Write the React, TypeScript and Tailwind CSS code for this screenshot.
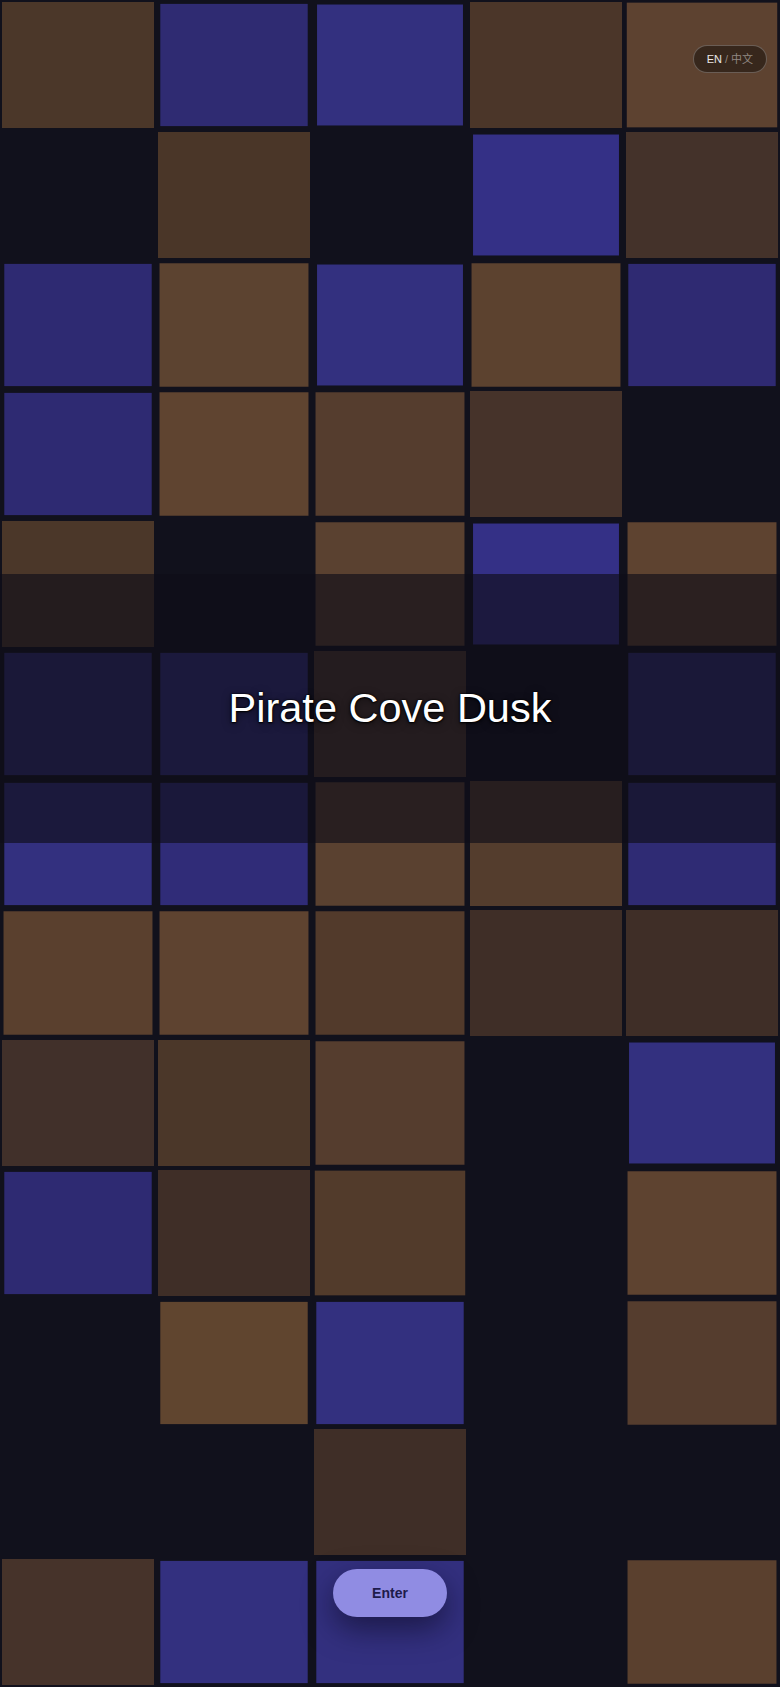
type Tile = [string, string] | null;

// each row: five cells, [bg, scale] or null for an empty slot
const ROWS: Tile[][] = [
  [['bg-[#4b3729]', 'scale-100'], ['bg-[#2f2b72]', 'scale-[0.97]'], ['bg-[#33307f]', 'scale-[0.96]'], ['bg-[#4b3629]', 'scale-100'], ['bg-[#5d4230]', 'scale-[0.99]']],
  [null, ['bg-[#4a3628]', 'scale-100'], null, ['bg-[#343086]', 'scale-[0.96]'], ['bg-[#44322a]', 'scale-100']],
  [['bg-[#2e2a72]', 'scale-[0.97]'], ['bg-[#5c4330]', 'scale-[0.98]'], ['bg-[#33307f]', 'scale-[0.96]'], ['bg-[#5c422f]', 'scale-[0.98]'], ['bg-[#2f2a72]', 'scale-[0.97]']],
  [['bg-[#2e2a72]', 'scale-[0.97]'], ['bg-[#5f4430]', 'scale-[0.98]'], ['bg-[#553d2e]', 'scale-[0.98]'], ['bg-[#46332a]', 'scale-100'], null],
  [['bg-[#4b3729]', 'scale-100'], null, ['bg-[#5a4130]', 'scale-[0.98]'], ['bg-[#343086]', 'scale-[0.96]'], ['bg-[#5e4330]', 'scale-[0.98]']],
  [['bg-[#2f2b74]', 'scale-[0.97]'], ['bg-[#33307f]', 'scale-[0.97]'], ['bg-[#4c382d]', 'scale-100'], null, ['bg-[#2f2b74]', 'scale-[0.97]']],
  [['bg-[#33307f]', 'scale-[0.97]'], ['bg-[#302c78]', 'scale-[0.97]'], ['bg-[#5a4130]', 'scale-[0.98]'], ['bg-[#543d2d]', 'scale-100'], ['bg-[#2f2b74]', 'scale-[0.97]']],
  [['bg-[#5a402e]', 'scale-[0.98]'], ['bg-[#5e4330]', 'scale-[0.98]'], ['bg-[#523a2b]', 'scale-[0.98]'], ['bg-[#3f2e27]', 'scale-100'], ['bg-[#3f2e27]', 'scale-100']],
  [['bg-[#41302a]', 'scale-100'], ['bg-[#4b3729]', 'scale-100'], ['bg-[#553d2e]', 'scale-[0.98]'], null, ['bg-[#33307f]', 'scale-[0.96]']],
  [['bg-[#2e2a72]', 'scale-[0.97]'], ['bg-[#3f2e27]', 'scale-100'], ['bg-[#523b2b]', 'scale-[0.99]'], null, ['bg-[#5e4330]', 'scale-[0.98]']],
  [null, ['bg-[#60452f]', 'scale-[0.97]'], ['bg-[#33307f]', 'scale-[0.97]'], null, ['bg-[#553d2e]', 'scale-[0.98]']],
  [null, null, ['bg-[#3f2e27]', 'scale-100'], null, null],
  [['bg-[#46332a]', 'scale-100'], ['bg-[#33307f]', 'scale-[0.97]'], ['bg-[#33307f]', 'scale-[0.97]'], null, ['bg-[#5a402e]', 'scale-[0.98]']],
];

export default function App() {
  return (
    <div className="relative h-screen w-full overflow-hidden bg-[#11111c] font-['Liberation_Sans',Arial,sans-serif]">
      {/* Tile wall */}
      <div className="grid h-full w-full grid-cols-5 grid-rows-13">
        {ROWS.flatMap((row, r) =>
          row.map((tile, c) => (
            <div key={`${r}-${c}`} className="p-[2px]">
              {tile && <div className={`h-full w-full ${tile[0]} ${tile[1]}`} />}
            </div>
          ))
        )}
      </div>

      {/* Title band */}
      <div className="absolute inset-x-0 top-[34%] flex h-[16%] items-center justify-center bg-[#0f0e18]/65">
        <h1 className="-mt-[2px] text-[41.5px] font-normal leading-none text-white [text-shadow:0_0_2px_#000,0_0_1px_#000,0_1px_2px_#000,0_2px_8px_rgba(0,0,0,0.6)]">
          Pirate Cove Dusk
        </h1>
      </div>

      {/* Language toggle */}
      <button className="absolute right-[13px] top-[45px] flex h-[28px] items-center gap-[3px] rounded-full border border-white/25 bg-black/40 px-[13px] font-['Liberation_Sans','Noto_Sans_CJK_SC',sans-serif] text-[11px] leading-none">
        <span className="font-normal text-white/90">EN</span>
        <span className="text-white/45">/</span>
        <span className="text-white/45">中文</span>
      </button>

      {/* Enter */}
      <button className="absolute bottom-[70px] left-1/2 h-[48px] w-[114px] -translate-x-1/2 rounded-full bg-[#908ce3] text-sm font-bold text-[#1e1b4b] shadow-[0_12px_30px_rgba(10,8,30,0.55)]">
        Enter
      </button>
    </div>
  );
}
